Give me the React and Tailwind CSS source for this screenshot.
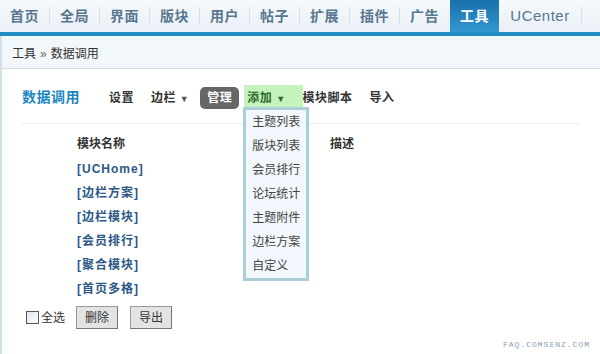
import React from "react";

const tabs = ["首页", "全局", "界面", "版块", "用户", "帖子", "扩展", "插件", "广告", "工具", "UCenter"];
const menu = ["主题列表", "版块列表", "会员排行", "论坛统计", "主题附件", "边栏方案", "自定义"];
const rows = ["[UCHome]", "[边栏方案]", "[边栏模块]", "[会员排行]", "[聚合模块]", "[首页多格]"];

const font = { fontFamily: '"Liberation Sans", "Noto Sans CJK SC", sans-serif' };

const App = () => {
  return (
    <div className="w-[600px] h-[354px] overflow-hidden bg-white text-[12px] text-[#333]" style={font}>
      {/* top nav */}
      <div className="flex h-[32px] items-stretch bg-gradient-to-b from-[#f6f9fc] to-[#e9f0f6]">
        {tabs.map((t) => {
          const active = t === "工具";
          return (
            <div key={t} className="flex items-center">
              <div
                className={`flex h-full items-center justify-center text-[14px] font-bold ${
                  t === "UCenter" ? "w-[82px] font-normal text-[15px] tracking-[0.5px]" : "w-[49px] tracking-[0.5px]"
                } ${active ? "bg-gradient-to-b from-[#1770ab] to-[#3597cf] text-white" : "text-[#58778f]"}`}
              >
                {t}
              </div>
              {!active && t !== "广告" && <span className="h-[18px] w-px bg-[#d3dfe9]" />}
              {t === "广告" && <span className="w-px" />}
            </div>
          );
        })}
      </div>
      <div className="h-[4px] bg-[#218dc3]" />

      <div className="border-l-2 border-[#cfe0eb] h-[318px]">
        {/* breadcrumb */}
        <div className="flex h-[33px] items-center bg-[#f2f7fb] border-b border-[#cbd9e4] pl-[10px] pt-[3px] text-[12px] text-[#333]">
          工具 <span className="mx-[4px] text-[#666]">»</span> 数据调用
        </div>

        {/* subnav */}
        <div className="mx-[20px] flex h-[55px] items-center border-b border-[#eeeeee] pt-[3px] tracking-[0.5px]">
          <span className="text-[14px] font-bold text-[#1a86c3]">数据调用</span>
          <span className="ml-[29px] font-bold">设置</span>
          <span className="ml-[17px] font-bold">
            边栏 <span className="text-[9px] text-[#555]">▼</span>
          </span>
          <span className="ml-[11px] rounded-[5px] bg-[#666] px-[7px] py-[2px] font-bold text-white">管理</span>
          <div className="relative ml-[5px]">
            <span className="block bg-[#c6f3bd] pl-[3px] pr-[17px] py-[4px] font-bold text-[#2a6a2a]">
              添加 <span className="text-[9px]">▼</span>
            </span>
            <div className="absolute left-[-1px] top-[22px] z-10 w-[66px] border-[3px] border-[#a9cfd9] bg-[#f1f7fc] tracking-normal">
              {menu.map((m) => (
                <div key={m} className="h-[24px] pl-[6px] leading-[24px] text-[#444]">
                  {m}
                </div>
              ))}
            </div>
          </div>
          <span className="font-bold">模块脚本</span>
          <span className="ml-[17px] font-bold">导入</span>
        </div>

        {/* table */}
        <div className="pl-[75px] pt-[8px]">
          <div className="flex h-[24px] items-center font-bold">
            <span className="w-[253px]">模块名称</span>
            <span>描述</span>
          </div>
          {rows.map((r) => (
            <div key={r} className="flex h-[24px] items-center pt-[2px] font-bold tracking-[1px] text-[#2c5786]">
              {r}
            </div>
          ))}
        </div>

        {/* footer */}
        <div className="flex items-center pl-[24px] pt-[6px]">
          <span className="h-[13px] w-[13px] border border-[#555] bg-gradient-to-br from-[#dfe6ee] to-white" />
          <span className="ml-[2px]">全选</span>
          <button className="ml-[11px] h-[23px] w-[42px] border border-[#999] border-b-[#777] border-r-[#777] bg-[#e3e3e3]">删除</button>
          <button className="ml-[12px] h-[23px] w-[42px] border border-[#999] border-b-[#777] border-r-[#777] bg-[#e3e3e3]">导出</button>
        </div>

        <div className="mt-[10px] pr-[10px] text-right font-mono text-[8px] tracking-[1px] text-[#8aa0b4]">FAQ.COMSENZ.COM</div>
      </div>
    </div>
  );
};

export default App;
